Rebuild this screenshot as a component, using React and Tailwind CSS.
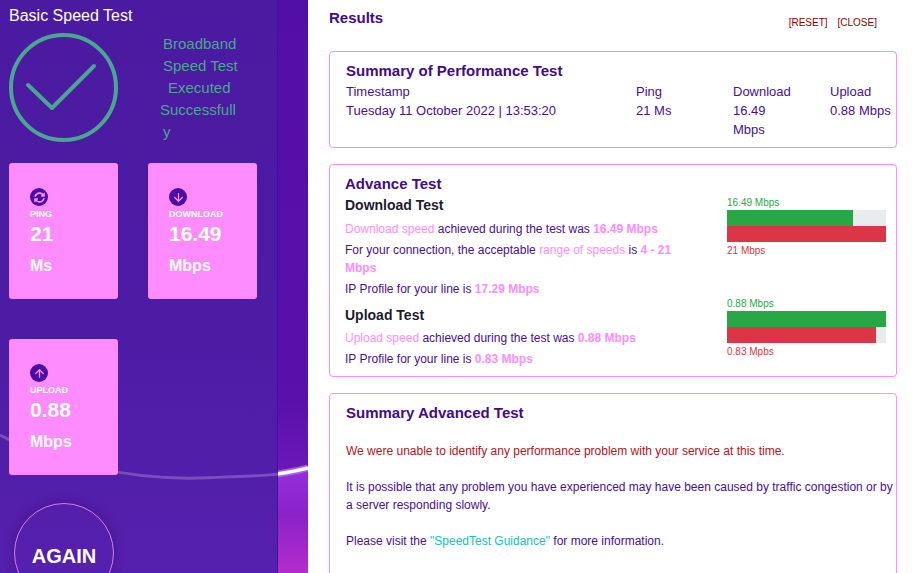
import { ArrowDown, ArrowUp } from "lucide-react";
import { FaSyncAlt } from "react-icons/fa";

const Pink = ({ children }) => <span className="text-[#ff8cff]">{children}</span>;
const PinkB = ({ children }) => <b className="font-bold text-[#ff8cff]">{children}</b>;

const wavePath = "M0 435 C50 462 130 480 200 478 S280 475 308 468";

function StatCard({ icon, label, value, unit }) {
  return (
    <div className="relative h-[136px] w-[109px] rounded-[3px] bg-[#ff8cff] pl-[21px] pt-[25px] text-white">
      <div className="flex h-[18px] w-[18px] items-center justify-center rounded-full bg-[#4a0ea5] text-[#ff8cff]">
        {icon}
      </div>
      <div className="mt-[1px] text-[9px] leading-[14px] font-bold">{label}</div>
      <div className="text-[21px] leading-[26px] font-bold">{value}</div>
      <div className="text-[16px] leading-[38px] font-bold">{unit}</div>
    </div>
  );
}

function Bar({ top, topWidth, bottomWidth, bottom }) {
  return (
    <div className="w-[159px] text-[10px] leading-[12px]">
      <div className="mb-[1px] text-[#28a745]">{top}</div>
      <div className="h-4 bg-[#e9ecef]">
        <div className="h-4 bg-[#28a745]" style={{ width: topWidth }} />
      </div>
      <div className="h-4 bg-[#e9ecef]">
        <div className="h-4 bg-[#dc3545]" style={{ width: bottomWidth }} />
      </div>
      <div className="mt-[3px] text-[#dc3545]">{bottom}</div>
    </div>
  );
}

export default function App() {
  return (
    <div className="flex h-[573px] w-[913px] overflow-hidden bg-white font-['Liberation_Sans',Arial,sans-serif] text-[12px] text-[#4a0e96]">
      {/* left panel */}
      <div className="relative h-full w-[308px] shrink-0 bg-[linear-gradient(180deg,#520fa8_0%,#5a10aa_70%,#6a18b8_82%)]">
        <svg className="absolute top-0 left-0" width="308" height="573" viewBox="0 0 308 573">
          <defs>
            <linearGradient id="below" x1="0" y1="468" x2="0" y2="573" gradientUnits="userSpaceOnUse">
              <stop offset="0" stopColor="#9430de" />
              <stop offset="0.45" stopColor="#8a22c8" />
              <stop offset="1" stopColor="#b42ccc" />
            </linearGradient>
          </defs>
          <path d={`${wavePath} L308 573 L0 573 Z`} fill="url(#below)" />
          <path d={wavePath} fill="none" stroke="#b88cf0" strokeWidth="7" opacity="0.6" />
          <path d={wavePath} fill="none" stroke="#ffffff" strokeWidth="3.5" />
        </svg>
        <div className="relative h-full w-[278px] border-r border-[#45109a] bg-[linear-gradient(180deg,#4a1aa0_0%,#4d1ca5_60%,#5520ad_100%)] pl-[9px]">
          <svg className="absolute top-0 left-0" width="278" height="573" viewBox="0 0 278 573">
            <path d={wavePath} fill="none" stroke="#ffffff" strokeWidth="3" opacity="0.22" />
          </svg>
          <div className="relative pt-[6px] text-[16px] leading-[20px] text-white">Basic Speed Test</div>
          <div className="relative flex h-[137px]">
            <svg className="mt-[7px] shrink-0" width="109" height="109" viewBox="0 0 109 109">
              <circle cx="54.5" cy="54.5" r="52.5" fill="none" stroke="#4aa690" strokeWidth="4" />
              <path d="M19 52 L43 75 L85 33" fill="none" stroke="#4aa690" strokeWidth="4" strokeLinecap="round" strokeLinejoin="round" />
            </svg>
            <div className="mt-[7px] ml-[42px] w-[80px] text-[15px] leading-[22px] whitespace-nowrap text-[#4aa690]">
              <div className="ml-[3px]">Broadband</div>
              <div className="ml-[3px]">Speed Test</div>
              <div className="ml-[8px]">Executed</div>
              <div>Successfull</div>
              <div className="ml-[3px]">y</div>
            </div>
          </div>
          <div className="flex gap-[30px]">
            <StatCard icon={<FaSyncAlt size={11} />} label="PING" value="21" unit="Ms" />
            <StatCard icon={<ArrowDown size={13} strokeWidth={2.4} />} label="DOWNLOAD" value="16.49" unit="Mbps" />
          </div>
          <div className="mt-[40px]">
            <StatCard icon={<ArrowUp size={13} strokeWidth={2.4} />} label="UPLOAD" value="0.88" unit="Mbps" />
          </div>
          <div className="relative mt-[28px] ml-[5px] flex h-[100px] w-[100px] items-center justify-center rounded-full border border-[#d67ee8] pt-[6px] text-[20px] font-bold text-white shadow-[0_0_10px_rgba(60,10,120,0.55)]">
            AGAIN
          </div>
        </div>
      </div>

      {/* results */}
      <div className="min-w-0 flex-1 pr-[16px] pl-[21px]">
        <div className="flex h-[51px] items-start justify-between">
          <div className="pt-[10px] text-[15px] leading-[16px] font-bold text-[#420a8c]">Results</div>
          <div className="flex gap-[10px] pt-[17px] pr-[20px] text-[10px] leading-[12px] text-[#8b0000]">
            <span>[RESET]</span>
            <span>[CLOSE]</span>
          </div>
        </div>

        <div className="h-[97px] rounded-[4px] border border-[#ff8cff] pt-[10px] pl-[16px]">
          <div className="text-[15px] leading-[18px] font-bold text-[#420a8c]">Summary of Performance Test</div>
          <div className="mt-[2px] grid grid-cols-[290px_97px_97px_auto] text-[13px] leading-[19px]">
            <div>Timestamp</div>
            <div>Ping</div>
            <div>Download</div>
            <div>Upload</div>
            <div>Tuesday 11 October 2022 | 13:53:20</div>
            <div>21 Ms</div>
            <div className="w-[60px]">16.49 Mbps</div>
            <div className="whitespace-nowrap">0.88 Mbps</div>
          </div>
        </div>

        <div className="mt-[16px] flex h-[213px] justify-between rounded-[4px] border border-[#ff8cff] pt-[10px] pr-[10px] pl-[15px]">
          <div className="w-[340px]">
            <div className="text-[15px] leading-[18px] font-bold text-[#420a8c]">Advance Test</div>
            <div className="mt-[3px] text-[14px] leading-[18px] font-bold text-[#1f1a2e]">Download Test</div>
            <p className="mt-[6px] leading-[18px]">
              <Pink>Download speed</Pink> achieved during the test was <PinkB>16.49 Mbps</PinkB>
            </p>
            <p className="mt-[3px] leading-[18px]">
              For your connection, the acceptable <Pink>range of speeds</Pink> is <PinkB>4 - 21 Mbps</PinkB>
            </p>
            <p className="mt-[3px] leading-[18px]">
              IP Profile for your line is <PinkB>17.29 Mbps</PinkB>
            </p>
            <div className="mt-[8px] text-[14px] leading-[18px] font-bold text-[#1f1a2e]">Upload Test</div>
            <p className="mt-[5px] leading-[18px]">
              <Pink>Upload speed</Pink> achieved during the test was <PinkB>0.88 Mbps</PinkB>
            </p>
            <p className="mt-[3px] leading-[18px]">
              IP Profile for your line is <PinkB>0.83 Mbps</PinkB>
            </p>
          </div>
          <div className="flex flex-col gap-[41px] pt-[22px]">
            <Bar top="16.49 Mbps" topWidth="79%" bottomWidth="100%" bottom="21 Mbps" />
            <Bar top="0.88 Mbps" topWidth="100%" bottomWidth="94%" bottom="0.83 Mpbs" />
          </div>
        </div>

        <div className="mt-[16px] h-[200px] rounded-[4px] border border-[#ff8cff] pt-[10px] pl-[16px]">
          <div className="text-[15px] leading-[18px] font-bold text-[#420a8c]">Summary Advanced Test</div>
          <p className="mt-[20px] leading-[18px] text-[#b5121b]">
            We were unable to identify any performance problem with your service at this time.
          </p>
          <p className="mt-[18px] w-[552px] leading-[18px]">
            It is possible that any problem you have experienced may have been caused by traffic congestion or by a server responding slowly.
          </p>
          <p className="mt-[18px] leading-[18px]">
            Please visit the <span className="text-[#17c0b8]">"SpeedTest Guidance"</span> for more information.
          </p>
        </div>
      </div>
    </div>
  );
}
